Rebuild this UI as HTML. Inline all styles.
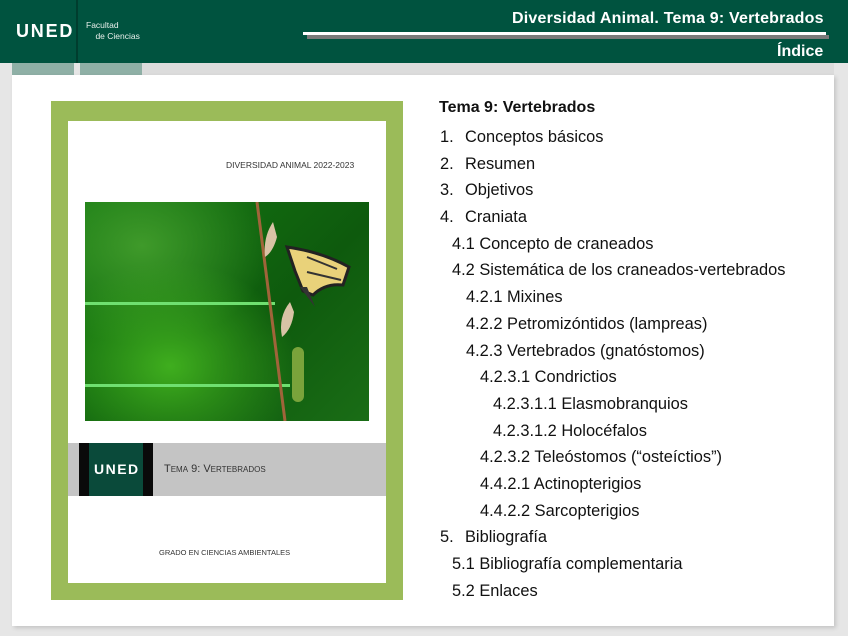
<!DOCTYPE html>
<html><head><meta charset="utf-8"><style>
*{margin:0;padding:0;box-sizing:border-box}
body{width:848px;height:636px;background:#e6e6e6;position:relative;overflow:hidden;font-family:"Liberation Sans",Arial,sans-serif}
.a{position:absolute}
.hdr{left:0;top:0;width:848px;height:63px;background:#00533f}
.t{position:absolute;white-space:nowrap;font-size:16.4px;color:#111;line-height:18px}
</style></head><body>
<div class="a hdr"></div>
<div class="a" style="left:76px;top:0;width:2px;height:63px;background:#003d2e"></div>
<div class="a" style="left:16px;top:21px;color:#fff;font-weight:bold;font-size:18px;letter-spacing:1.8px">UNED</div>
<div class="a" style="left:86px;top:20px;color:#e8f0ec;font-size:8.5px;line-height:11px">Facultad<br>&nbsp;&nbsp;&nbsp;&nbsp;de Ciencias</div>
<div class="a" style="left:512px;top:10px;color:#fff;font-weight:bold;font-size:16px;letter-spacing:0.2px">Diversidad Animal. Tema 9: Vertebrados</div>
<div class="a" style="left:307px;top:35px;width:522px;height:4px;background:#7a7a7a"></div>
<div class="a" style="left:303px;top:32px;width:523px;height:3px;background:#fff"></div>
<div class="a" style="left:777px;top:43px;color:#fff;font-weight:bold;font-size:16px">Índice</div>
<div class="a" style="left:12px;top:63px;width:62px;height:12px;background:#8fb0a6"></div>
<div class="a" style="left:80px;top:63px;width:62px;height:12px;background:#8fb0a6"></div>
<div class="a" style="left:142px;top:63px;width:692px;height:12px;background:#dcdcdc"></div>
<div class="a" style="left:12px;top:75px;width:822px;height:551px;background:#fff;box-shadow:2px 2px 4px rgba(0,0,0,.15)"></div>

<div class="a" style="left:51px;top:101px;width:352px;height:499px;background:#9bbb59"></div>
<div class="a" style="left:68px;top:121px;width:318px;height:462px;background:#fff"></div>
<div class="a" style="left:226px;top:160px;font-size:8.5px;color:#333">DIVERSIDAD ANIMAL 2022-2023</div>
<div class="a" style="left:85px;top:202px;width:284px;height:219px;background:radial-gradient(ellipse at 30% 75%,#3fae1e,transparent 45%),radial-gradient(ellipse at 20% 20%,#3f9a2a,transparent 40%),linear-gradient(135deg,#157a12,#0e5a0d 60%,#1a6d16)"></div>
<div class="a" style="left:85px;top:302px;width:190px;height:3px;background:#6fe070"></div>
<div class="a" style="left:85px;top:384px;width:205px;height:3px;background:#6fe070"></div>
<svg class="a" style="left:85px;top:202px" width="284" height="219">
<path d="M172 0 L200 219" stroke="#a0643a" stroke-width="3" fill="none"/>
<path d="M188 20 q-10 15 -8 35 q8 -5 12 -20z" fill="#d9c3a6"/>
<path d="M205 100 q-12 15 -8 35 q10 -8 12 -25z" fill="#d9c3a6"/>
<path d="M202 45 q35 5 62 20 l-6 18 q-18 -2 -30 10 l-10 -4 l-8 -20 z" fill="#e9d27a" stroke="#222" stroke-width="3"/>
<path d="M215 85 l15 20 l-8 -20 z" fill="#333"/>
<path d="M222 55 l30 12 M222 70 l34 8" stroke="#333" stroke-width="2"/>
<rect x="207" y="145" width="12" height="55" rx="6" fill="#7aa33b"/>
</svg>
<div class="a" style="left:68px;top:443px;width:318px;height:53px;background:#c4c4c4"></div>
<div class="a" style="left:79px;top:443px;width:74px;height:53px;background:#0a0a0a"></div>
<div class="a" style="left:89px;top:443px;width:54px;height:53px;background:#0a4a3a"></div>
<div class="a" style="left:94px;top:461px;color:#fff;font-weight:bold;font-size:14px;letter-spacing:1.5px">UNED</div>
<div class="a" style="left:164px;top:463px;font-size:11px;color:#333;font-variant:small-caps">Tema 9: Vertebrados</div>
<div class="a" style="left:159px;top:548px;font-size:7.5px;color:#333">GRADO EN CIENCIAS AMBIENTALES</div>

<div class="t" style="left:439px;top:99px;font-weight:bold;font-size:16px">Tema 9: Vertebrados</div>
<div class="t" style="left:440px;top:128px">1.</div><div class="t" style="left:465px;top:128px">Conceptos básicos</div>
<div class="t" style="left:440px;top:155px">2.</div><div class="t" style="left:465px;top:155px">Resumen</div>
<div class="t" style="left:440px;top:181px">3.</div><div class="t" style="left:465px;top:181px">Objetivos</div>
<div class="t" style="left:440px;top:208px">4.</div><div class="t" style="left:465px;top:208px">Craniata</div>
<div class="t" style="left:452px;top:235px">4.1 Concepto de craneados</div>
<div class="t" style="left:452px;top:261px">4.2 Sistemática de los craneados-vertebrados</div>
<div class="t" style="left:466px;top:288px">4.2.1 Mixines</div>
<div class="t" style="left:466px;top:315px">4.2.2 Petromizóntidos (lampreas)</div>
<div class="t" style="left:466px;top:342px">4.2.3 Vertebrados (gnatóstomos)</div>
<div class="t" style="left:480px;top:368px">4.2.3.1 Condrictios</div>
<div class="t" style="left:493px;top:395px">4.2.3.1.1 Elasmobranquios</div>
<div class="t" style="left:493px;top:422px">4.2.3.1.2 Holocéfalos</div>
<div class="t" style="left:480px;top:448px">4.2.3.2 Teleóstomos (“osteíctios”)</div>
<div class="t" style="left:480px;top:475px">4.4.2.1 Actinopterigios</div>
<div class="t" style="left:480px;top:502px">4.4.2.2 Sarcopterigios</div>
<div class="t" style="left:440px;top:528px">5.</div><div class="t" style="left:465px;top:528px">Bibliografía</div>
<div class="t" style="left:452px;top:555px">5.1 Bibliografía complementaria</div>
<div class="t" style="left:452px;top:582px">5.2 Enlaces</div>
</body></html>
